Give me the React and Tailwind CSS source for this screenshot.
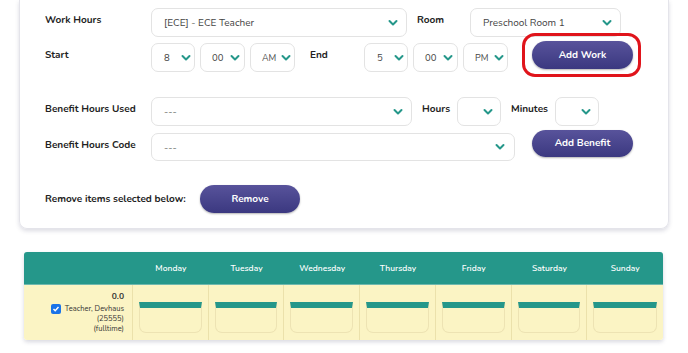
import React from "react";

const Chev = () => (
  <svg width="10" height="7" viewBox="0 0 10 7" className="shrink-0">
    <polyline points="1.5,1.5 5,5 8.5,1.5" fill="none" stroke="#25978a" strokeWidth="2" strokeLinecap="round" strokeLinejoin="round" />
  </svg>
);

const Select = ({ w, h = "h-[29px]", text, pl = "pl-[12px]", chevR = "right-[8px]", size = "text-[10px]" }) => (
  <div className={`${w} ${h} ${pl} relative shrink-0 flex items-center rounded-[7px] border border-[#e3e3e3] bg-white ${size} text-[#444]`}>
    <span className="pt-[2px]">{text}</span>
    <div className={`absolute ${chevR} top-1/2 -translate-y-1/2 flex`}>
      <Chev />
    </div>
  </div>
);

const Label = ({ w, children, cls = "" }) => (
  <div className={`${w} shrink-0 text-[10px] font-bold text-[#222] leading-[14px] ${cls}`}>{children}</div>
);

const Btn = ({ w, h, children, cls = "" }) => (
  <div className={`${w} ${h} shrink-0 flex items-center justify-center rounded-full bg-gradient-to-b from-[#58539b] to-[#3b3880] text-white text-[10px] font-bold shadow-[0_1px_2px_rgba(0,0,0,0.3)] ${cls}`}>
    {children}
  </div>
);

const days = ["Monday", "Tuesday", "Wednesday", "Thursday", "Friday", "Saturday", "Sunday"];

export default function App() {
  return (
    <div className="w-[688px] h-[353px] bg-white overflow-hidden" style={{ fontFamily: "Nunito, Lato, 'Open Sans', sans-serif" }}>
      <div className="ml-[19px] w-[650px] border-x border-b border-[#e4e4ea] rounded-b-[8px] shadow-[0_2px_4px_rgba(60,60,100,0.18)] pl-[25px] pt-[8px] pb-[15px]">
        {/* Row 1 */}
        <div className="flex items-start">
          <Label w="w-[106px]" cls="pt-[5px]">Work Hours</Label>
          <Select w="w-[256px]" text="[ECE] - ECE Teacher" />
          <Label w="w-[53px]" cls="ml-[10px] pt-[5px]">Room</Label>
          <Select w="w-[151px]" text="Preschool Room 1" />
        </div>
        {/* Row 2 */}
        <div className="flex items-start mt-[6px]">
          <Label w="w-[106px]" cls="pt-[5px]">Start</Label>
          <Select w="w-[44px]" text="8" pl="pl-[12px]" chevR="right-[3px]" size="text-[9.5px]" />
          <Select w="w-[45px] ml-[5px]" text="00" pl="pl-[11px]" chevR="right-[4px]" size="text-[9.5px]" />
          <Select w="w-[45px] ml-[5px]" text="AM" pl="pl-[11px]" chevR="right-[3px]" size="text-[9px]" />
          <Label w="w-[54px]" cls="ml-[15px] pt-[5px]">End</Label>
          <Select w="w-[44px]" text="5" pl="pl-[12px]" chevR="right-[3px]" size="text-[9.5px]" />
          <Select w="w-[45px] ml-[5px]" text="00" pl="pl-[11px]" chevR="right-[4px]" size="text-[9.5px]" />
          <Select w="w-[45px] ml-[5px]" text="PM" pl="pl-[11px]" chevR="right-[3px]" size="text-[9px]" />
          <div className="relative ml-[24px] -mt-[2px]">
            <Btn w="w-[101px]" h="h-[28px]">Add Work</Btn>
            <div className="absolute left-[-10px] top-[-8px] w-[119px] h-[44px] border-[3px] border-[#e0141b] rounded-[13px]" />
          </div>
        </div>
        {/* Row 3 */}
        <div className="flex items-start mt-[25px]">
          <Label w="w-[106px]" cls="pt-[5px]">Benefit Hours Used</Label>
          <Select w="w-[261px]" text="---" />
          <Label w="w-[35px]" cls="ml-[10px] pt-[5px]">Hours</Label>
          <Select w="w-[44px]" text="" chevR="right-[7px]" />
          <Label w="w-[44px]" cls="ml-[10px] pt-[5px]">Minutes</Label>
          <Select w="w-[44px]" text="" chevR="right-[7px]" />
        </div>
        {/* Row 4 */}
        <div className="flex items-start mt-[7px]">
          <Label w="w-[106px]" cls="pt-[5px]">Benefit Hours Code</Label>
          <Select w="w-[364px]" h="h-[28px]" text="---" chevR="right-[9px]" />
          <Btn w="w-[101px]" h="h-[27px]" cls="ml-[17px] -mt-[3px]">Add Benefit</Btn>
        </div>
        {/* Row 5 */}
        <div className="flex items-center mt-[24px]">
          <Label w="w-[155px]">Remove items selected below:</Label>
          <Btn w="w-[100px]" h="h-[28px]">Remove</Btn>
        </div>
      </div>

      {/* Table */}
      <div className="ml-[24px] mt-[23px] w-[639px] rounded-[3px] overflow-hidden shadow-[0_2px_4px_rgba(60,60,100,0.2)]">
        <div className="grid grid-cols-[109px_repeat(7,1fr)] h-[33px] bg-[#25978a] border-b border-[#6fb8ae]">
          <div />
          {days.map((d) => (
            <div key={d} className="flex items-center justify-center text-white text-[8.5px] font-semibold">{d}</div>
          ))}
        </div>
        <div className="grid grid-cols-[109px_repeat(7,1fr)] h-[55px] bg-[#fbf4c4]">
          <div className="flex flex-col items-end pr-[8px] pt-[6px] text-[#333] border-r border-[#ebe1ab]">
            <div className="text-[8.5px] font-bold leading-[11px]">0.0</div>
            <div className="flex items-center mt-[2px] h-[10px]">
              <div className="w-[10px] h-[10px] rounded-[2px] bg-[#1a73e8] flex items-center justify-center mr-[4px]">
                <svg width="8" height="8" viewBox="0 0 8 8"><polyline points="1.5,4 3.2,5.8 6.5,2" fill="none" stroke="white" strokeWidth="1.4" /></svg>
              </div>
              <span className="text-[7.5px] leading-[10px]">Teacher, Devhaus</span>
            </div>
            <div className="text-[7.5px] leading-[9.5px]">(25555)</div>
            <div className="text-[7.5px] leading-[9.5px]">(fulltime)</div>
          </div>
          {days.map((d, i) => (
            <div key={d} className={`px-[6px] pt-[17px] ${i < 6 ? "border-r border-[#ebe1ab]" : ""}`}>
              <div className="h-[31px] border-t-[6px] border-t-[#25978a] border-x border-b border-x-[#ede3b3] border-b-[#ede3b3] rounded-b-[7px]" />
            </div>
          ))}
        </div>
      </div>
    </div>
  );
}
